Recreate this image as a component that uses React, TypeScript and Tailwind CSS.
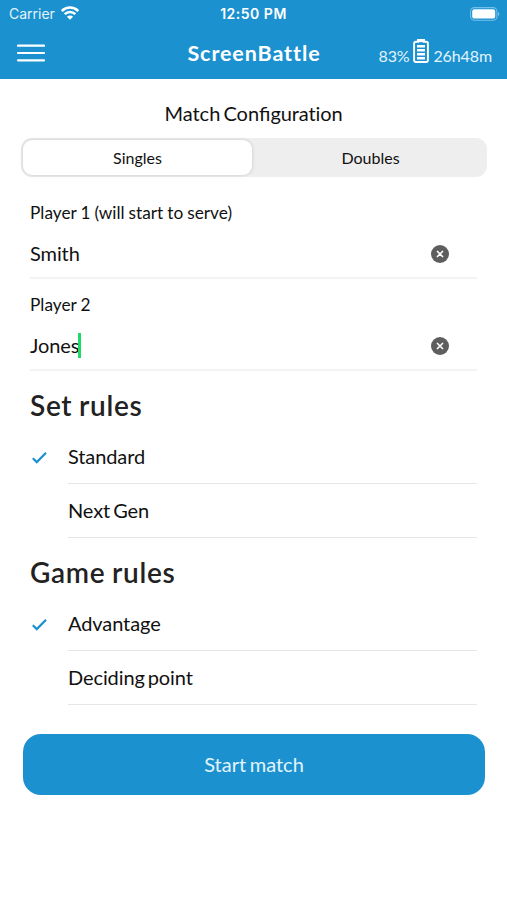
import React, { useState } from 'react';

interface PlayerFieldProps {
  label: string;
  value: string;
  focused?: boolean;
  onClear: () => void;
}

const MenuIcon: React.FC = () => (
  <svg viewBox="0 0 28 20" className="w-7 h-5" fill="none">
    <path d="M1 2.7h26M1 10h26M1 17.3h26" stroke="#fff" strokeWidth="2.2" strokeLinecap="round" />
  </svg>
);

const ClearIcon: React.FC = () => (
  <svg viewBox="0 0 18 18" className="w-[18px] h-[18px]">
    <circle cx="9" cy="9" r="9" fill="#5e5e5e" />
    <path d="M6 6l6 6M12 6l-6 6" stroke="#fff" strokeWidth="1.6" />
  </svg>
);

const CheckIcon: React.FC = () => (
  <svg viewBox="0 0 16 14" className="w-4 h-3.5" fill="none">
    <path d="M1.8 7.2l4 3.9L15 1.8" stroke="#1c91d0" strokeWidth="2.2" />
  </svg>
);

const PlayerField: React.FC<PlayerFieldProps> = ({ label, value, focused, onClear }) => (
  <div className="mx-[30px] h-[92px] border-b-2 border-[#f3f3f3] flex flex-col">
    <label className="h-[49px] pt-[15px] text-[17.25px] leading-[22px] [word-spacing:-0.4px]">{label}</label>
    <div className="flex items-center justify-between h-[34px] pr-[28.5px]">
      <div className="flex items-center text-[20px] leading-[26px]">
        <span className="tracking-[-0.1px]">{value}</span>
        {focused && <span className="w-[2.5px] h-[25px] -ml-px bg-[#1ddb68]" />}
      </div>
      <button type="button" aria-label="Clear" onClick={onClear} className="pt-px">
        <ClearIcon />
      </button>
    </div>
  </div>
);

interface RuleGroupProps {
  title: string;
  options: string[];
  selected: string;
  onSelect: (option: string) => void;
}

const RuleGroup: React.FC<RuleGroupProps> = ({ title, options, selected, onSelect }) => (
  <section className="px-[30px]">
    <h2 className="h-[59px] pt-[17px] text-[28px] leading-[34px] font-semibold tracking-[0.7px] [word-spacing:-1px] text-[#222]">{title}</h2>
    {options.map((option) => (
      <button key={option} type="button" onClick={() => onSelect(option)} className="flex w-full h-[54px] text-left">
        <span className="w-[38px] h-[54px] flex items-center pl-px pt-[2px]">{selected === option && <CheckIcon />}</span>
        <span className="flex-1 h-[54px] flex items-center pb-0.5 border-b border-[#e6e6e6] text-[20px] tracking-[-0.1px] [word-spacing:-2px]">{option}</span>
      </button>
    ))}
  </section>
);

const App: React.FC = () => {
  const [mode, setMode] = useState('Singles');
  const [playerOne, setPlayerOne] = useState('Smith');
  const [playerTwo, setPlayerTwo] = useState('Jones');
  const [setRule, setSetRule] = useState('Standard');
  const [gameRule, setGameRule] = useState('Advantage');

  return (
    <div className="min-h-screen bg-white text-[#111] font-['Lato',sans-serif]">
      <header className="h-[79px] bg-[#1c91d0] text-white">
        {/* Status bar */}
        <div className="grid grid-cols-3 items-center h-[27px] pl-[9px] pr-[7px] font-['Inter',sans-serif]">
          <div className="flex items-center gap-1.5 text-[14px] text-[#e2f4fc]">
            <span>Carrier</span>
            <svg viewBox="0 0 18 14" className="w-[18px] h-3.5 -mt-0.5" fill="none" stroke="#fff" strokeWidth="2.5">
              <path d="M.8 5a11.6 11.6 0 0 1 16.4 0" />
              <path d="M3.7 8.2a7.5 7.5 0 0 1 10.6 0" />
              <path d="M9 13.8L5.9 10.7a4.4 4.4 0 0 1 6.2 0z" fill="#fff" stroke="none" />
            </svg>
          </div>
          <div className="-ml-0.5 text-center text-[14px] leading-[21px] font-semibold tracking-[0.5px]">12:50 PM</div>
          <svg viewBox="0 0 30 14" className="w-[30px] h-3.5 justify-self-end">
            <rect x=".6" y=".6" width="26.3" height="12.6" rx="3.8" fill="none" stroke="#75c0e8" strokeWidth="1.1" />
            <rect x="2.2" y="2.2" width="23" height="9.4" rx="2.2" fill="#fff" />
            <path d="M28 4.8c1.8.8 1.8 3.6 0 4.4z" fill="#75c0e8" />
          </svg>
        </div>
        {/* Navigation bar */}
        <div className="grid grid-cols-3 items-center h-[52px] pl-[17px] pr-[15px]">
          <button type="button" aria-label="Menu" className="w-7">
            <MenuIcon />
          </button>
          <h1 className="-ml-px text-center text-[21.5px] leading-[32px] font-bold tracking-[0.9px]">ScreenBattle</h1>
          <div className="flex items-center justify-end gap-1 whitespace-nowrap text-[16px] text-[#e2f4fc]">
            <span className="pt-[5px] tracking-[-0.2px]">83%</span>
            <svg viewBox="0 0 16 24" className="w-4 h-6 -mt-1" fill="none">
              <path d="M5 2.8V1h6v1.8h2.2c1 0 1.7.7 1.7 1.7v16.8c0 1-.7 1.7-1.7 1.7H2.8c-1 0-1.7-.7-1.7-1.7V4.5c0-1 .7-1.7 1.7-1.7z" stroke="#fff" strokeWidth="1.9" />
              <path d="M5 1.2h6v2H5z" fill="#fff" />
              <path d="M4 7.2h8M4 11.2h8M4 15.2h8M4 19.2h8" stroke="#fff" strokeWidth="2.4" />
            </svg>
            <span className="pt-[5px] tracking-[-0.1px]">26h48m</span>
          </div>
        </div>
      </header>

      <main>
        <p className="h-[59px] pt-[21px] text-center text-[20px] leading-[26px] [word-spacing:-2px]">
          Match Confi<span className="[font-variant-ligatures:none] tracking-[-0.1px]">guration</span>
        </p>
        <div className="mr-5 ml-[21px] h-[39px] p-0.5 grid grid-cols-[229px_1fr] rounded-[11px] bg-[#eee]">
          {['Singles', 'Doubles'].map((item) => (
            <button
              key={item}
              type="button"
              onClick={() => setMode(item)}
              className={`text-[16px] rounded-[9px] ${mode === item ? 'bg-white shadow-[0_0_3px_1px_rgba(0,0,0,0.1)]' : 'pl-1'}`}
            >
              {item}
            </button>
          ))}
        </div>

        <div className="pt-[10px]">
          <PlayerField label="Player 1 (will start to serve)" value={playerOne} onClear={() => setPlayerOne('')} />
          <PlayerField label="Player 2" value={playerTwo} focused onClear={() => setPlayerTwo('')} />
        </div>

        <RuleGroup title="Set rules" options={['Standard', 'Next Gen']} selected={setRule} onSelect={setSetRule} />
        <RuleGroup title="Game rules" options={['Advantage', 'Deciding point']} selected={gameRule} onSelect={setGameRule} />

        <div className="pt-[29px] pl-[23px] pr-[22px]">
          <button type="button" className="w-full h-[61px] pb-0.5 rounded-[18px] bg-[#1c91d0] text-[20px] [word-spacing:-1.5px] text-[#e2f4fc]">
            Start match
          </button>
        </div>
      </main>
    </div>
  );
};

export default App;
